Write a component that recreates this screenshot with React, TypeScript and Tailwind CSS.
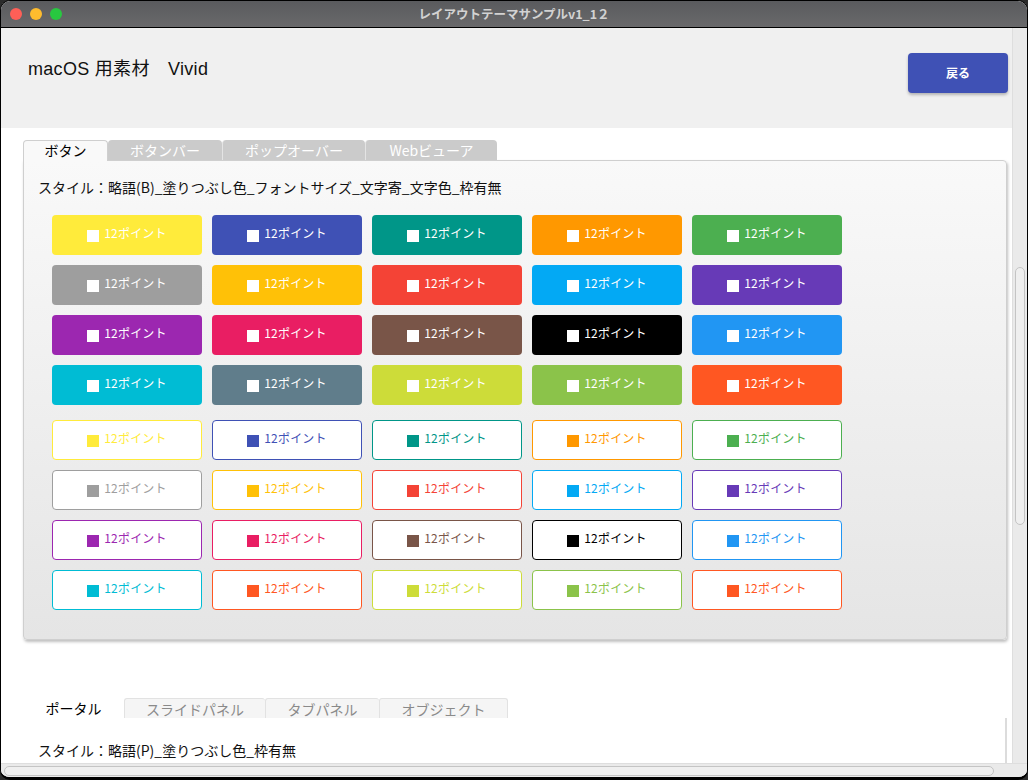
import React from "react";

type C = { bg: string; border: string; text: string };

const colors: C[][] = [
  [
    { bg: "bg-[#ffeb3b]", border: "border-[#ffeb3b]", text: "text-[#ffeb3b]" },
    { bg: "bg-[#3f51b5]", border: "border-[#3f51b5]", text: "text-[#3f51b5]" },
    { bg: "bg-[#009688]", border: "border-[#009688]", text: "text-[#009688]" },
    { bg: "bg-[#ff9800]", border: "border-[#ff9800]", text: "text-[#ff9800]" },
    { bg: "bg-[#4caf50]", border: "border-[#4caf50]", text: "text-[#4caf50]" },
  ],
  [
    { bg: "bg-[#9e9e9e]", border: "border-[#9e9e9e]", text: "text-[#9e9e9e]" },
    { bg: "bg-[#ffc107]", border: "border-[#ffc107]", text: "text-[#ffc107]" },
    { bg: "bg-[#f44336]", border: "border-[#f44336]", text: "text-[#f44336]" },
    { bg: "bg-[#03a9f4]", border: "border-[#03a9f4]", text: "text-[#03a9f4]" },
    { bg: "bg-[#673ab7]", border: "border-[#673ab7]", text: "text-[#673ab7]" },
  ],
  [
    { bg: "bg-[#9c27b0]", border: "border-[#9c27b0]", text: "text-[#9c27b0]" },
    { bg: "bg-[#e91e63]", border: "border-[#e91e63]", text: "text-[#e91e63]" },
    { bg: "bg-[#795548]", border: "border-[#795548]", text: "text-[#795548]" },
    { bg: "bg-[#000000]", border: "border-[#000000]", text: "text-[#000000]" },
    { bg: "bg-[#2196f3]", border: "border-[#2196f3]", text: "text-[#2196f3]" },
  ],
  [
    { bg: "bg-[#00bcd4]", border: "border-[#00bcd4]", text: "text-[#00bcd4]" },
    { bg: "bg-[#607d8b]", border: "border-[#607d8b]", text: "text-[#607d8b]" },
    { bg: "bg-[#cddc39]", border: "border-[#cddc39]", text: "text-[#cddc39]" },
    { bg: "bg-[#8bc34a]", border: "border-[#8bc34a]", text: "text-[#8bc34a]" },
    { bg: "bg-[#ff5722]", border: "border-[#ff5722]", text: "text-[#ff5722]" },
  ],
];

const outlineColors: C[][] = [
  colors[0],
  colors[1],
  colors[2],
  [
    colors[3][0],
    { bg: "bg-[#ff5722]", border: "border-[#ff5722]", text: "text-[#ff5722]" },
    colors[3][2],
    colors[3][3],
    colors[3][4],
  ],
];

function FilledBtn({ c }: { c: C }) {
  return (
    <div className={`${c.bg} w-[150px] h-[40px] rounded-[4px] flex items-start justify-center gap-[5px] pt-[10px] text-white`}>
      <span className="w-[12px] h-[12px] bg-white mt-[5px]" />
      <span className="text-[12px] leading-[16px] tracking-[0.2px]">12ポイント</span>
    </div>
  );
}

function OutlineBtn({ c }: { c: C }) {
  return (
    <div className={`${c.border} ${c.text} w-[150px] h-[40px] rounded-[4px] border bg-white flex items-start justify-center gap-[5px] pt-[9px]`}>
      <span className={`${c.bg} w-[12px] h-[12px] mt-[5px]`} />
      <span className="text-[12px] leading-[16px] tracking-[0.2px]">12ポイント</span>
    </div>
  );
}

export default function App() {
  return (
    <div className="w-[1028px] h-[780px] bg-[#2b2b2b] font-['Noto_Sans_CJK_JP',sans-serif]">
      <div className="w-[1028px] h-[780px] rounded-[10px] border border-black border-b-[3px] overflow-hidden flex flex-col bg-white">
        {/* title bar */}
        <div className="h-[27px] shrink-0 border-b border-black bg-gradient-to-b from-[#5a5b5e] to-[#69696b] relative flex items-center justify-center">
          <div className="absolute left-[9px] top-[7px] flex gap-[8px]">
            <span className="w-[12px] h-[12px] rounded-full bg-[#fe5f57]" />
            <span className="w-[12px] h-[12px] rounded-full bg-[#febc2e]" />
            <span className="w-[12px] h-[12px] rounded-full bg-[#28c840]" />
          </div>
          <span className="text-[12.5px] font-bold text-[#d2d2d2] leading-none">レイアウトテーマサンプルv1_1２</span>
        </div>

        {/* main */}
        <div className="flex-1 flex min-h-0">
          <div className="flex-1 flex flex-col overflow-hidden min-w-0">
            {/* header */}
            <div className="h-[100px] shrink-0 bg-[#f0f0f0] flex items-start justify-between pl-[27px] pr-[4px]">
              <div className="mt-[29px] text-[18px] leading-[24px] tracking-[0.3px] text-[#111] font-['Liberation_Sans','Noto_Sans_CJK_JP',sans-serif]">
                macOS 用素材　Vivid
              </div>
              <div className="mt-[25px] w-[100px] h-[40px] rounded-[4px] bg-[#3f51b5] text-white text-[12px] font-bold flex items-center justify-center shadow-[0_2px_3px_rgba(0,0,0,0.25)]">
                戻る
              </div>
            </div>

            {/* body */}
            <div className="flex-1 bg-white pl-[22px] pt-[12px] flex flex-col">
              {/* tabs */}
              <div className="flex h-[20px] relative z-10">
                <div className="w-[85px] h-[21px] rounded-t-[4px] border-l border-t border-r border-[#cfcfcf] bg-[#f9f9f9] text-[14px] leading-[19px] text-black text-center">
                  ボタン
                </div>
                <div className="w-[114px] h-[20px] rounded-t-[4px] bg-[#cbcbcb] text-white text-[14px] leading-[20px] text-center">ボタンバー</div>
                <div className="w-[143px] h-[20px] rounded-t-[4px] bg-[#cbcbcb] border-l border-[#e4e4e4] text-white text-[14px] leading-[20px] text-center">ポップオーバー</div>
                <div className="w-[132px] h-[20px] rounded-t-[4px] bg-[#cbcbcb] border-l border-[#e4e4e4] text-white text-[14px] leading-[20px] text-center">Webビューア</div>
              </div>
              {/* panel */}
              <div className="w-[984px] rounded-[4px] rounded-tl-none border border-[#cfcfcf] bg-gradient-to-b from-[#f9f9f9] to-[#e5e5e5] shadow-[1px_2px_3px_rgba(0,0,0,0.25)] pt-[16px] pl-[14px] pb-[29px]">
                <div className="text-[14px] leading-[20px] text-[#111]">
                  スタイル：略語(B)_塗りつぶし色_フォントサイズ_文字寄_文字色_枠有無
                </div>
                <div className="pl-[14px] mt-[18px] flex flex-col gap-[10px]">
                  {colors.map((row, i) => (
                    <div key={i} className="flex gap-[10px]">
                      {row.map((c, j) => (
                        <FilledBtn key={j} c={c} />
                      ))}
                    </div>
                  ))}
                </div>
                <div className="pl-[14px] mt-[15px] flex flex-col gap-[10px]">
                  {outlineColors.map((row, i) => (
                    <div key={i} className="flex gap-[10px]">
                      {row.map((c, j) => (
                        <OutlineBtn key={j} c={c} />
                      ))}
                    </div>
                  ))}
                </div>
              </div>

              {/* second tabs */}
              <div className="flex h-[20px] mt-[58px]">
                <div className="w-[101px] h-[20px] bg-white text-[14px] leading-[20px] text-black text-center">ポータル</div>
                <div className="w-[141px] h-[20px] rounded-t-[3px] bg-[#f5f5f5] border-l border-t border-[#e2e2e2] text-[#8a8a8a] text-[14px] leading-[20px] text-center">スライドパネル</div>
                <div className="w-[114px] h-[20px] rounded-t-[3px] bg-[#f5f5f5] border-l border-t border-[#e2e2e2] text-[#8a8a8a] text-[14px] leading-[20px] text-center">タブパネル</div>
                <div className="w-[129px] h-[20px] rounded-t-[3px] bg-[#f5f5f5] border-l border-t border-r border-[#e2e2e2] text-[#8a8a8a] text-[14px] leading-[20px] text-center">オブジェクト</div>
              </div>
              <div className="w-[984px] flex-1 bg-white border-r-2 border-[#dcdcdc] pt-[22px] pl-[15px]">
                <div className="text-[14px] leading-[20px] text-[#111]">スタイル：略語(P)_塗りつぶし色_枠有無</div>
              </div>
            </div>
          </div>

          {/* vertical scrollbar */}
          <div className="w-[15px] shrink-0 bg-[#eaeaea] border-l border-[#dedede] pt-[239px] flex justify-center">
            <div className="w-[10px] h-[258px] rounded-full border border-[#c4c4c4] bg-[#efefef]" />
          </div>
        </div>

        {/* horizontal scrollbar */}
        <div className="h-[14px] shrink-0 bg-[#eaeaea] border-t border-[#dedede] flex items-center pl-[3px]">
          <div className="w-[990px] h-[10px] rounded-full border border-[#c4c4c4] bg-[#efefef]" />
        </div>
      </div>
    </div>
  );
}
